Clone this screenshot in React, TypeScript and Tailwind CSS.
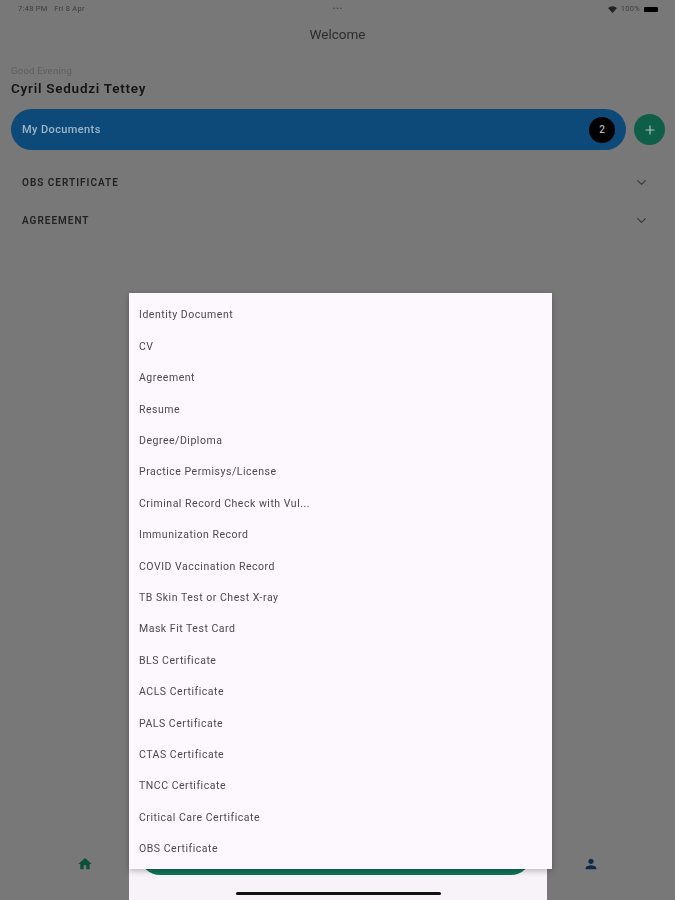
import { ChevronDown, Plus } from "lucide-react";

const items = [
  "Identity Document",
  "CV",
  "Agreement",
  "Resume",
  "Degree/Diploma",
  "Practice Permisys/License",
  "Criminal Record Check with Vul...",
  "Immunization Record",
  "COVID Vaccination Record",
  "TB Skin Test or Chest X-ray",
  "Mask Fit Test Card",
  "BLS Certificate",
  "ACLS Certificate",
  "PALS Certificate",
  "CTAS Certificate",
  "TNCC Certificate",
  "Critical Care Certificate",
  "OBS Certificate",
];

export default function App() {
  return (
    <div className="relative w-[675px] h-[900px] overflow-hidden bg-[#787878] font-['Roboto',sans-serif] text-[#1b1b1b]">
      <div className="h-[16px] pt-[2px] pl-[18px] pr-[17px] flex items-center justify-between text-[7.5px] tracking-[0.3px] text-[#3c3c3c]">
        <span className="w-[100px] blur-[0.4px]">7:48 PM&nbsp;&nbsp; Fri 8 Apr</span>
        <span className="tracking-[1px] text-[#444] blur-[0.3px]">•••</span>
        <div className="w-[100px] flex items-center justify-end gap-[4px] blur-[0.3px]">
          <svg width="9" height="7" viewBox="0 0 9 7"><path d="M0 2 Q4.5 -1.5 9 2 L4.5 7 Z" fill="#222" /></svg>
          <span>100%</span>
          <span className="w-[14px] h-[5px] rounded-[1px] bg-black" />
        </div>
      </div>

      <div className="mt-[8px] h-[20px] flex items-center justify-center text-[13.5px] text-[#2c2c2c] blur-[0.3px]">Welcome</div>

      <div className="mt-[21px] pl-[11px]">
        <div className="text-[9.5px] leading-[12px] tracking-[0.25px] text-[#5e5e5e] blur-[0.3px]">Good Evening</div>
        <div className="mt-[2px] text-[13.5px] leading-[18px] font-semibold tracking-[0.75px] text-[#141414] blur-[0.3px]">Cyril Sedudzi Tettey</div>
      </div>

      <div className="mt-[12px] pl-[11px] pr-[10px] flex items-center gap-[8px]">
        <div className="w-[615px] h-[41px] rounded-full bg-[#0d4a79] pl-[11px] pr-[11px] flex items-center justify-between">
          <span className="pt-[1px] text-[11px] font-medium tracking-[0.4px] text-[#9fb6c8] blur-[0.3px]">My Documents</span>
          <span className="w-[26px] h-[26px] rounded-full bg-black flex items-center justify-center text-[10px] font-medium text-[#b5b5b5]">2</span>
        </div>
        <div className="w-[31px] h-[31px] rounded-full bg-[#0f5e48] flex items-center justify-center">
          <Plus size={14} strokeWidth={2} className="text-[#a8c4ba]" />
        </div>
      </div>

      <div className="mt-[13px] pl-[22px] pr-[26px] h-[38px] flex items-center justify-between">
        <span className="text-[10px] font-semibold tracking-[1px] text-[#222] blur-[0.3px]">OBS CERTIFICATE</span>
        <ChevronDown size={15} strokeWidth={2} className="text-[#3a3a3a]" />
      </div>
      <div className="pl-[22px] pr-[26px] h-[38px] flex items-center justify-between">
        <span className="text-[10px] font-semibold tracking-[1px] text-[#222] blur-[0.3px]">AGREEMENT</span>
        <ChevronDown size={15} strokeWidth={2} className="text-[#3a3a3a]" />
      </div>

      <svg width="16" height="16" viewBox="0 0 24 24" fill="#0a4f3b" className="absolute left-[77px] top-[856px]">
        <path d="M10 20v-6h4v6h5v-8h3L12 3 2 12h3v8z" />
      </svg>
      <svg width="16" height="16" viewBox="0 0 24 24" fill="#13294b" className="absolute left-[583px] top-[856px]">
        <path d="M12 12c2.21 0 4-1.79 4-4s-1.79-4-4-4-4 1.79-4 4 1.79 4 4 4zm0 2c-2.67 0-8 1.34-8 4v2h16v-2c0-2.66-5.33-4-8-4z" />
      </svg>

      <div className="absolute left-[129px] top-[700px] w-[418px] h-[200px] bg-[#f7f3f8]">
        <div className="absolute left-[11px] right-[16px] top-[150px] h-[25px] rounded-b-[20px] bg-[#107358]" />
        <div className="absolute left-[107px] top-[192px] w-[205px] h-[3px] rounded-full bg-[#111]" />
      </div>

      <div className="absolute left-[129px] top-[293px] w-[423px] h-[576px] bg-[#fdf8fe] shadow-[0_2px_6px_rgba(0,0,0,0.25)] py-[6.5px]">
        {items.map((t) => (
          <div key={t} className="h-[31.42px] pl-[10px] flex items-center text-[10.5px] tracking-[0.52px] text-[#4a4a4a] blur-[0.3px]">
            {t}
          </div>
        ))}
      </div>
    </div>
  );
}
